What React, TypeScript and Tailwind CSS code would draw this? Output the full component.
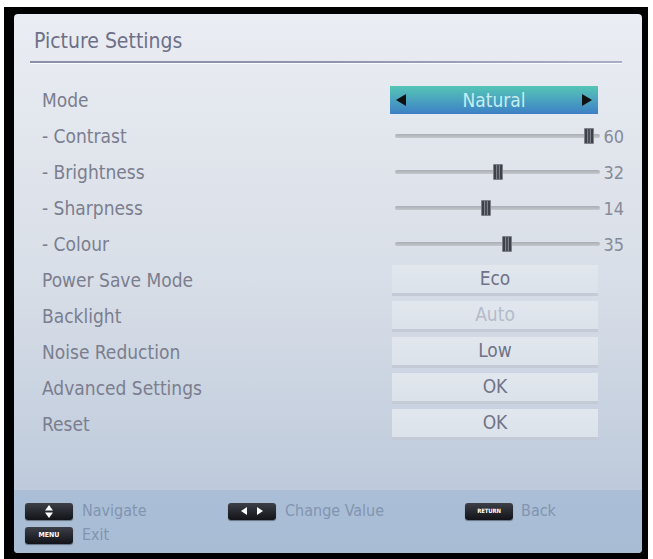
import React from "react";

const font = "[font-family:'DejaVu_Sans_Condensed','DejaVu_Sans',sans-serif] [font-stretch:condensed]";

function Thumb({ pos }: { pos: string }) {
  return (
    <div className={`absolute top-1/2 -translate-y-1/2 ${pos} w-[10px] h-[16px] bg-[#7c8088] flex gap-[1px] px-[1px] py-[1px] rounded-[1px]`}>
      <div className="flex-1 bg-[#3e4149]" />
      <div className="flex-1 bg-[#4a4d55]" />
      <div className="flex-1 bg-[#3e4149]" />
    </div>
  );
}

function SliderRow({ label, value, pos }: { label: string; value: string; pos: string }) {
  return (
    <div className="h-[36px] flex items-center">
      <div className="flex-1 text-[19px] text-[#7b7e8e]">{label}</div>
      <div className="w-[208px] relative h-[16px] flex items-center">
        <div className="ml-[5px] -mr-[2px] flex-1 h-[4px] rounded-full bg-gradient-to-b from-[#a9aeb5] to-[#c4c8cd]" />
        <Thumb pos={pos} />
      </div>
      <div className="w-[26px] text-right text-[18px] text-[#878b99]">{value}</div>
    </div>
  );
}

function BoxRow({ label, value, faded }: { label: string; value: string; faded?: boolean }) {
  return (
    <div className="h-[36px] flex items-center">
      <div className="flex-1 text-[19px] text-[#7b7e8e]">{label}</div>
      <div className="w-[208px] pl-[2px]">
        <div
          className={`h-[31px] flex items-center justify-center text-[19px] bg-gradient-to-b from-[#e2e7ee] to-[#dce2ea] border-b-[3px] border-[#c4cbd7] ${
            faded ? "text-[#b4bbca]" : "text-[#6f7387]"
          }`}
        >
          {value}
        </div>
      </div>
      <div className="w-[26px]" />
    </div>
  );
}

function Key({ children }: { children?: React.ReactNode }) {
  return (
    <div className="w-[48px] h-[17px] rounded-[3px] bg-gradient-to-b from-[#3d4048] to-[#121419] shadow-[0_1px_1px_rgba(0,0,0,0.4)] flex items-center justify-center">
      {children}
    </div>
  );
}

export default function App() {
  return (
    <div className={`min-h-[559px] w-[653px] bg-white pl-[4px] pt-[7px] ${font}`}>
      <div className="w-[644px] h-[552px] bg-black pl-[10px] pt-[7px] pr-[6px] pb-[6px]">
        <div className="h-full rounded-[4px] overflow-hidden flex flex-col bg-gradient-to-b from-[#eaedf3] via-[#d8dee7] to-[#b6c4d8]">
          {/* header */}
          <div className="pt-[15px] pl-[20px] h-[40px] text-[21px] leading-[25px] text-[#6d7088]">Picture Settings</div>
          <div className="mt-[7px] ml-[16px] mr-[20px] h-[2px] bg-gradient-to-r from-[#8a90ac] via-[#8e94b0] to-[#a8aec6] shadow-[0_1px_0_rgba(255,255,255,0.8)]" />

          {/* rows */}
          <div className="mt-[19px] pl-[28px] pr-[18px]">
            <div className="h-[36px] flex items-center">
              <div className="flex-1 text-[19px] text-[#7b7e8e]">Mode</div>
              <div className="w-[208px] h-[28px] bg-gradient-to-b from-[#56c5b5] via-[#4aa3bf] to-[#3e7fc6] flex items-center justify-between px-[6px]">
                <svg width="10" height="12" viewBox="0 0 10 12">
                  <polygon points="10,0 10,12 0,6" fill="#111" />
                </svg>
                <span className="text-[19px] text-[#c4eef0]">Natural</span>
                <svg width="10" height="12" viewBox="0 0 10 12">
                  <polygon points="0,0 0,12 10,6" fill="#111" />
                </svg>
              </div>
              <div className="w-[26px]" />
            </div>
            <SliderRow label="- Contrast" value="60" pos="left-[194px]" />
            <SliderRow label="- Brightness" value="32" pos="left-[103px]" />
            <SliderRow label="- Sharpness" value="14" pos="left-[91px]" />
            <SliderRow label="- Colour" value="35" pos="left-[112px]" />
            <BoxRow label="Power Save Mode" value="Eco" />
            <BoxRow label="Backlight" value="Auto" faded />
            <BoxRow label="Noise Reduction" value="Low" />
            <BoxRow label="Advanced Settings" value="OK" />
            <BoxRow label="Reset" value="OK" />
          </div>

          <div className="flex-1" />

          {/* footer */}
          <div className="h-[63px] bg-gradient-to-b from-[#aabfd7] to-[#a8bcd4] pl-[11px] pt-[11px] text-[16px] text-[#8294b0]">
            <div className="h-[20px] flex items-center">
              <div className="w-[203px] flex items-center">
                <Key>
                  <svg width="8" height="13" viewBox="0 0 8 13">
                    <polygon points="4,0 8,5.5 0,5.5" fill="#fff" />
                    <polygon points="0,7.5 8,7.5 4,13" fill="#fff" />
                  </svg>
                </Key>
                <span className="ml-[9px]">Navigate</span>
              </div>
              <div className="w-[237px] flex items-center">
                <Key>
                  <div className="flex items-center gap-[10px]">
                    <svg width="6" height="8" viewBox="0 0 6 8">
                      <polygon points="6,0 6,8 0,4" fill="#fff" />
                    </svg>
                    <svg width="6" height="8" viewBox="0 0 6 8">
                      <polygon points="0,0 0,8 6,4" fill="#fff" />
                    </svg>
                  </div>
                </Key>
                <span className="ml-[9px]">Change Value</span>
              </div>
              <div className="flex items-center">
                <Key>
                  <span className="text-[6px] leading-none font-bold text-white tracking-tight">RETURN</span>
                </Key>
                <span className="ml-[8px]">Back</span>
              </div>
            </div>
            <div className="h-[20px] mt-[4px] flex items-center">
              <Key>
                <span className="text-[7px] leading-none font-bold text-white">MENU</span>
              </Key>
              <span className="ml-[9px]">Exit</span>
            </div>
          </div>
        </div>
      </div>
    </div>
  );
}
